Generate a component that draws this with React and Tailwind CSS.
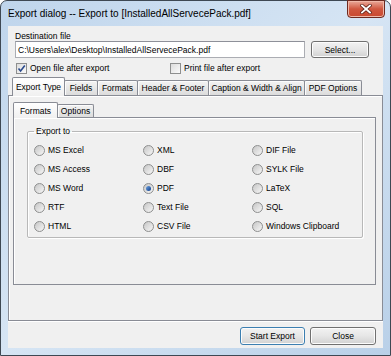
import React from "react";

const ui = "font-['Liberation_Sans',Arial,sans-serif] text-[8.5px] leading-[10px] text-black";

function CheckBox({ label, checked }) {
  return (
    <div className="flex items-center gap-[3px] h-[12px]">
      <span className="w-[11px] h-[11px] border border-[#8e8f8f] bg-gradient-to-br from-[#dcdcdc] to-[#fbfbfb] flex items-center justify-center">
        {checked && (
          <svg width="9" height="9" viewBox="0 0 9 9">
            <path d="M1.5 4.5 L3.6 7 L7.8 1.5" fill="none" stroke="#2a4a8c" strokeWidth="1.6" />
          </svg>
        )}
      </span>
      <span>{label}</span>
    </div>
  );
}

function Radio({ label, checked }) {
  return (
    <div className="flex items-center gap-[3px] h-[12px]">
      <span className="w-[11px] h-[11px] rounded-full border border-[#8e8f8f] bg-gradient-to-br from-[#c6c6c6] to-[#f7f7f7] flex items-center justify-center">
        {checked && <span className="w-[5px] h-[5px] rounded-full bg-gradient-to-br from-[#6fa3e0] to-[#0d3c8a]" />}
      </span>
      <span>{label}</span>
    </div>
  );
}

function Button({ children, className = "" }) {
  return (
    <div
      className={
        "flex items-center justify-center rounded-[3px] border border-[#707070] bg-gradient-to-b from-[#f2f2f2] via-[#e6e6e6] to-[#d2d2d2] shadow-[inset_0_0_0_1px_#fcfcfc] " +
        className
      }
    >
      {children}
    </div>
  );
}

function Tab({ label, active, w, h, hActive }) {
  return active ? (
    <div
      className={`${w} ${hActive} relative z-10 -mb-px border border-b-0 border-[#898c95] bg-gradient-to-b from-[#ffffff] to-[#f0f0f0] flex items-center justify-center rounded-t-[2px]`}
    >
      {label}
    </div>
  ) : (
    <div
      className={`${w} ${h} -ml-px border border-b-0 border-[#898c95] bg-gradient-to-b from-[#f3f3f3] to-[#dcdcdc] flex items-center justify-center rounded-t-[2px] shadow-[inset_1px_1px_0_#fcfcfc]`}
    >
      {label}
    </div>
  );
}

const col1 = [
  ["MS Excel"],
  ["MS Access"],
  ["MS Word"],
  ["RTF"],
  ["HTML"],
];
const col2 = [["XML"], ["DBF"], ["PDF", true], ["Text File"], ["CSV File"]];
const col3 = [["DIF File"], ["SYLK File"], ["LaTeX"], ["SQL"], ["Windows Clipboard"]];

export default function App() {
  return (
    <div className="w-[391px] h-[356px] flex flex-col px-[7px] pb-[7px] rounded-t-[7px] border border-[#3e4853] bg-gradient-to-br from-[#bfd5ec] via-[#d6e5f4] to-[#b9d0e8]">
      {/* title bar */}
      <div className="h-[25px] flex items-start relative">
        <span className="mt-[7px] font-['Liberation_Sans',Arial,sans-serif] text-[10px] leading-[11px] text-black">
          Export dialog -- Export to [InstalledAllServecePack.pdf]
        </span>
        <div className="absolute right-[-2px] top-[-1px] w-[38px] h-[18px] rounded-b-[4px] border border-[#6e2a20] bg-gradient-to-b from-[#e9a899] via-[#d0573f] to-[#c9492f] shadow-[inset_0_0_0_1px_#f0b8a8] flex items-center justify-center">
          <svg width="12" height="10" viewBox="0 0 12 10">
            <path d="M2 1.5 L10 8.5 M10 1.5 L2 8.5" stroke="#5a1e14" strokeWidth="3.4" strokeLinecap="square" />
            <path d="M2 1.5 L10 8.5 M10 1.5 L2 8.5" stroke="#ffffff" strokeWidth="1.9" strokeLinecap="square" />
          </svg>
        </div>
      </div>

      {/* client */}
      <div className={`flex-1 flex flex-col bg-[#f0f0f0] ${ui}`}>
        <div className="pt-[5px] pl-[7px] h-[15px]">Destination file</div>
        <div className="flex items-center gap-[6px] pl-[7px]">
          <div className="w-[290px] h-[17px] border border-[#abadb3] border-t-[#8e9099] bg-white flex items-center pl-[2px]">
            C:\Users\alex\Desktop\InstalledAllServecePack.pdf
          </div>
          <Button className="w-[58px] h-[17px]">Select...</Button>
        </div>
        <div className="mt-[4px] flex pl-[8px]">
          <div className="w-[154px]">
            <CheckBox label="Open file after export" checked />
          </div>
          <CheckBox label="Print file after export" />
        </div>

        {/* outer page control */}
        <div className="mt-[3px] flex items-end h-[18px] pl-[4px]">
          <Tab label="Export Type" active w="w-[53px]" hActive="h-[19px]" />
          <Tab label="Fields" w="w-[34px]" h="h-[15px]" />
          <Tab label="Formats" w="w-[41px]" h="h-[15px]" />
          <Tab label="Header & Footer" w="w-[72px]" h="h-[15px]" />
          <Tab label="Caption & Width & Align" w="w-[97px]" h="h-[15px]" />
          <Tab label="PDF Options" w="w-[58px]" h="h-[15px]" />
        </div>
        <div className="h-[226px] border border-[#898c95] bg-[#f0f0f0] shadow-[inset_1px_1px_0_#ffffff] pl-[4px] pr-[6px] pt-[6px]">
          {/* inner page control */}
          <div className="flex items-end h-[15px]">
            <Tab label="Formats" active w="w-[45px]" hActive="h-[16px]" />
            <Tab label="Options" w="w-[37px]" h="h-[13px]" />
          </div>
          <div className="h-[168px] border border-[#898c95] bg-[#f0f0f0] shadow-[inset_1px_1px_0_#ffffff] pl-[13px] pr-[12px] pt-[8px]">
            <fieldset className="border border-[#b8b8b8] shadow-[1px_1px_0_#ffffff,inset_1px_1px_0_#ffffff] rounded-[2px] pl-[6px] pb-[5px]">
              <legend className="px-[2px] leading-[11px]">Export to</legend>
              <div className="pt-[7px] grid grid-cols-[109px_109px_1fr]">
                {[col1, col2, col3].map((col, ci) => (
                  <div key={ci} className="flex flex-col gap-[7px]">
                    {col.map(([label, checked]) => (
                      <Radio key={label} label={label} checked={checked} />
                    ))}
                  </div>
                ))}
              </div>
            </fieldset>
          </div>
        </div>

        {/* buttons */}
        <div className="flex-1 flex items-start justify-end gap-[5px] pt-[6px] pr-[7px] shadow-[inset_0_1px_0_#ffffff]">
          <Button className="w-[65px] h-[18px] !border-[#3c7fb1] shadow-[inset_0_0_0_1px_#c4e5f6]">Start Export</Button>
          <Button className="w-[66px] h-[18px]">Close</Button>
        </div>
      </div>
    </div>
  );
}
